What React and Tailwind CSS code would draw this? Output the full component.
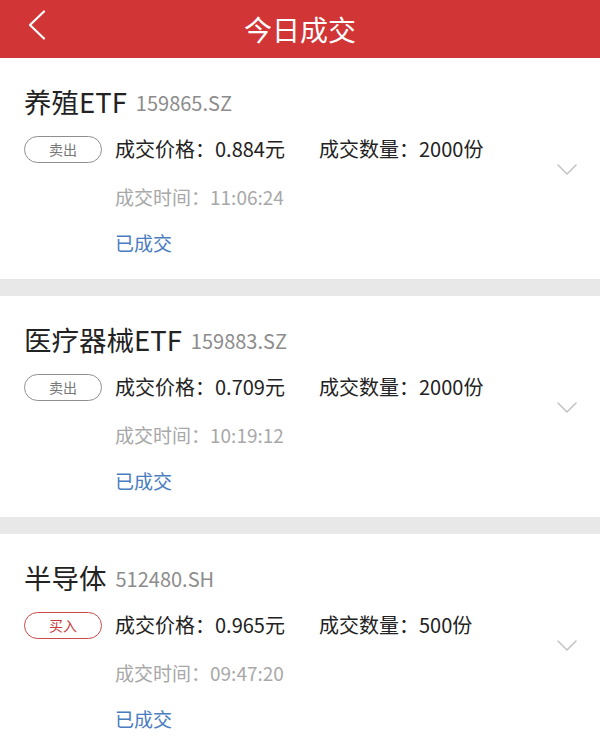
import React from 'react';

const trades = [
  { name: '养殖ETF', code: '159865.SZ', side: '卖出', price: '0.884', qty: '2000', time: '11:06:24' },
  { name: '医疗器械ETF', code: '159883.SZ', side: '卖出', price: '0.709', qty: '2000', time: '10:19:12' },
  { name: '半导体', code: '512480.SH', side: '买入', price: '0.965', qty: '500', time: '09:47:20' },
];

function SideBadge({ side }) {
  const buy = side === '买入';
  return (
    <span
      className={`flex h-[27px] w-[78px] shrink-0 items-center justify-center rounded-full border text-[14px] ${
        buy ? 'border-[#c84a4a] text-[#c83c3c]' : 'border-[#8f8f8f] text-[#777777]'
      }`}
    >
      {side}
    </span>
  );
}

function TradeCard({ trade }) {
  return (
    <div className="flex h-[221px] items-center bg-white pl-6 pr-[23px]">
      <div className="flex h-full flex-1 flex-col pt-[26px]">
        {/* name + code */}
        <div className="flex h-[36px] items-center gap-[9px]">
          <span className="text-[27.5px] text-[#222222]">{trade.name}</span>
          <span className="mt-[2px] text-[20px] text-[#8c8c8c]">{trade.code}</span>
        </div>

        {/* side + price + qty */}
        <div className="mt-[15px] flex h-[28px] items-center">
          <SideBadge side={trade.side} />
          <span className="ml-[13px] w-[204px] text-[20px] text-[#222222]">
            成交价格：{trade.price}元
          </span>
          <span className="text-[20px] text-[#222222]">成交数量：{trade.qty}份</span>
        </div>

        <div className="mt-[20px] flex h-[28px] items-center pl-[91px] text-[19px] text-[#a8a8a8]">
          成交时间：{trade.time}
        </div>

        <div className="mt-[18px] flex h-[28px] items-center pl-[91px] text-[19px] text-[#4a7dc0]">
          已成交
        </div>
      </div>

      <svg width="20" height="11" viewBox="0 0 20 11" fill="none" className="mt-[2px]">
        <path d="M1 1l9 9 9-9" stroke="#c4c4c4" strokeWidth="1.6" strokeLinecap="round" strokeLinejoin="round" />
      </svg>
    </div>
  );
}

export default function App() {
  return (
    <div
      className="min-h-[755px] w-[600px] bg-[#e8e8e8]"
      style={{ fontFamily: '"Noto Sans CJK SC", "Noto Sans", sans-serif' }}
    >
      {/* Header */}
      <div className="relative flex h-[58px] items-center justify-center bg-[#d13535]">
        <svg
          width="20"
          height="30"
          viewBox="0 0 20 30"
          fill="none"
          className="absolute left-[27px] top-[10px]"
        >
          <path d="M17 1.5L3 15l14 13.5" stroke="#ffffff" strokeWidth="2.2" strokeLinecap="round" strokeLinejoin="round" />
        </svg>
        <h1 className="text-[28px] font-normal text-white">今日成交</h1>
      </div>

      <div className="flex flex-col gap-[17px]">
        {trades.map((t) => (
          <TradeCard key={t.code} trade={t} />
        ))}
      </div>
    </div>
  );
}
